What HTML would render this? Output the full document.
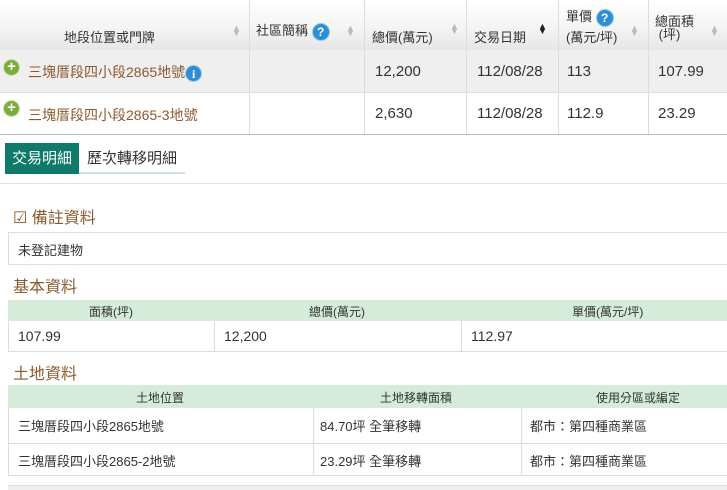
<!DOCTYPE html><html><head><meta charset="utf-8"><style>
body{margin:0;width:727px;height:489px;overflow:hidden;background:#fff;font-family:"Liberation Sans","Noto Sans CJK TC",sans-serif;position:relative}
.a{position:absolute}
.hd{top:0;height:50px;left:0;width:727px;background:linear-gradient(#fff,#f3f3f3 60%,#e6e6e6)}
.vl{position:absolute;width:1px;background:#ddd}
.t{position:absolute;font-size:15px;color:#333;white-space:nowrap}
.h{position:absolute;font-size:13px;color:#333;white-space:nowrap}
.br{color:#8a5a2e}
.sort{position:absolute;font-size:9px;color:#bbb;line-height:5px}
.sec{position:absolute;font-size:16px;color:#8a5a2e}
.gh{position:absolute;background:#d4ecd9;font-size:12px;color:#333}
.cell{position:absolute;font-size:13px;color:#333}
.q{display:inline-block;width:16px;height:16px;border-radius:50%;background:#2c8fd6;color:#fff;font-size:12px;font-weight:bold;text-align:center;line-height:16px;border:1px solid #9cd;vertical-align:middle}
.plus{position:absolute;width:15px;height:15px;border-radius:50%;background:#7aad3c;color:#fff;font-size:15px;font-weight:bold;line-height:14px;text-align:center;border:1px solid #cde3b4}
</style></head><body>
<div class="a hd"></div>
<div class="a" style="top:50px;height:42px;left:0;width:727px;background:#efefef"></div>
<div class="a" style="top:92px;height:1px;left:0;width:727px;background:#ddd"></div>
<div class="a" style="top:134px;height:1px;left:0;width:727px;background:#bbb"></div>
<div class="vl" style="left:249px;top:0;height:134px"></div>
<div class="vl" style="left:364px;top:0;height:134px"></div>
<div class="vl" style="left:466px;top:0;height:134px"></div>
<div class="vl" style="left:558px;top:0;height:134px"></div>
<div class="vl" style="left:648px;top:0;height:134px"></div>
<div class="h" style="left:64px;top:27px">地段位置或門牌</div>
<div class="h" style="left:256px;top:20px">社區簡稱 <span class="q">?</span></div>
<div class="h" style="left:372px;top:27px">總價(萬元)</div>
<div class="h" style="left:474px;top:27px">交易日期</div>
<div class="h" style="left:566px;top:6px">單價 <span class="q">?</span><br>(萬元/坪)</div>
<div class="h" style="left:655px;top:15px;line-height:13px">總面積<br>&nbsp;(坪)</div>
<div class="sort" style="left:232px;top:26px">▲<br>▼</div>
<div class="sort" style="left:346px;top:26px">▲<br>▼</div>
<div class="sort" style="left:450px;top:24px">▲<br>▼</div>
<div class="sort" style="left:538px;top:24px;color:#222">▲<br>▼</div>
<div class="sort" style="left:630px;top:26px">▲<br>▼</div>
<div class="sort" style="left:710px;top:26px">▲<br>▼</div>
<div class="plus" style="left:3px;top:59px">+</div>
<div class="plus" style="left:3px;top:100px">+</div>
<div class="t br" style="left:28px;top:62px;font-size:14px">三塊厝段四小段2865地號<span class="q" style="width:15px;height:15px;font-family:'Liberation Serif'">i</span></div>
<div class="t br" style="left:28px;top:105px;font-size:14px">三塊厝段四小段2865-3地號</div>
<div class="t" style="left:375px;top:63px">12,200</div>
<div class="t" style="left:477px;top:63px">112/08/28</div>
<div class="t" style="left:567px;top:63px">113</div>
<div class="t" style="left:658px;top:63px">107.99</div>
<div class="t" style="left:375px;top:105px">2,630</div>
<div class="t" style="left:477px;top:105px">112/08/28</div>
<div class="t" style="left:567px;top:105px">112.9</div>
<div class="t" style="left:658px;top:105px">23.29</div>
<div class="a" style="left:5px;top:143px;width:74px;height:31px;background:#107a6a;color:#fff;font-size:15px;line-height:31px;text-align:center">交易明細</div>
<div class="a" style="left:79px;top:143px;width:106px;height:29px;border-bottom:2px solid #cfe6dd;color:#333;font-size:15px;line-height:31px;text-align:center">歷次轉移明細</div>
<div class="a" style="left:0;top:183px;width:727px;height:1px;background:#e3e3e3"></div>
<div class="sec" style="left:13px;top:204px">☑ 備註資料</div>
<div class="a" style="left:8px;top:232px;width:719px;height:33px;border:1px solid #ddd;border-right:none;box-sizing:border-box"></div>
<div class="cell" style="left:18px;top:240px">未登記建物</div>
<div class="sec" style="left:13px;top:273px">基本資料</div>
<div class="gh" style="left:8px;top:300px;width:719px;height:21px"></div>
<div class="a" style="left:8px;top:321px;width:719px;height:31px;border:1px solid #ddd;border-top:none;border-right:none;box-sizing:border-box"></div>
<div class="vl" style="left:214px;top:321px;height:31px"></div>
<div class="vl" style="left:461px;top:321px;height:31px"></div>
<div class="h" style="left:89px;top:303px;font-size:12px">面積(坪)</div>
<div class="h" style="left:309px;top:303px;font-size:12px">總價(萬元)</div>
<div class="h" style="left:572px;top:303px;font-size:12px">單價(萬元/坪)</div>
<div class="cell" style="left:18px;top:328px;font-size:14px">107.99</div>
<div class="cell" style="left:224px;top:328px;font-size:14px">12,200</div>
<div class="cell" style="left:471px;top:328px;font-size:14px">112.97</div>
<div class="sec" style="left:13px;top:360px">土地資料</div>
<div class="gh" style="left:8px;top:385px;width:719px;height:23px"></div>
<div class="h" style="left:136px;top:389px;font-size:12px">土地位置</div>
<div class="h" style="left:380px;top:389px;font-size:12px">土地移轉面積</div>
<div class="h" style="left:596px;top:389px;font-size:12px">使用分區或編定</div>
<div class="a" style="left:8px;top:408px;width:719px;height:68px;border:1px solid #ddd;border-top:none;border-right:none;box-sizing:border-box"></div>
<div class="a" style="left:8px;top:443px;width:719px;height:1px;background:#ddd"></div>
<div class="vl" style="left:313px;top:408px;height:68px"></div>
<div class="vl" style="left:521px;top:408px;height:68px"></div>
<div class="cell" style="left:18px;top:416px">三塊厝段四小段2865地號</div>
<div class="cell" style="left:320px;top:416px">84.70坪 全筆移轉</div>
<div class="cell" style="left:530px;top:416px">都市：第四種商業區</div>
<div class="cell" style="left:18px;top:451px">三塊厝段四小段2865-2地號</div>
<div class="cell" style="left:320px;top:451px">23.29坪 全筆移轉</div>
<div class="cell" style="left:530px;top:451px">都市：第四種商業區</div>
<div class="a" style="left:8px;top:485px;width:719px;height:4px;background:#eee;border-top:1px solid #ddd"></div>
</body></html>
